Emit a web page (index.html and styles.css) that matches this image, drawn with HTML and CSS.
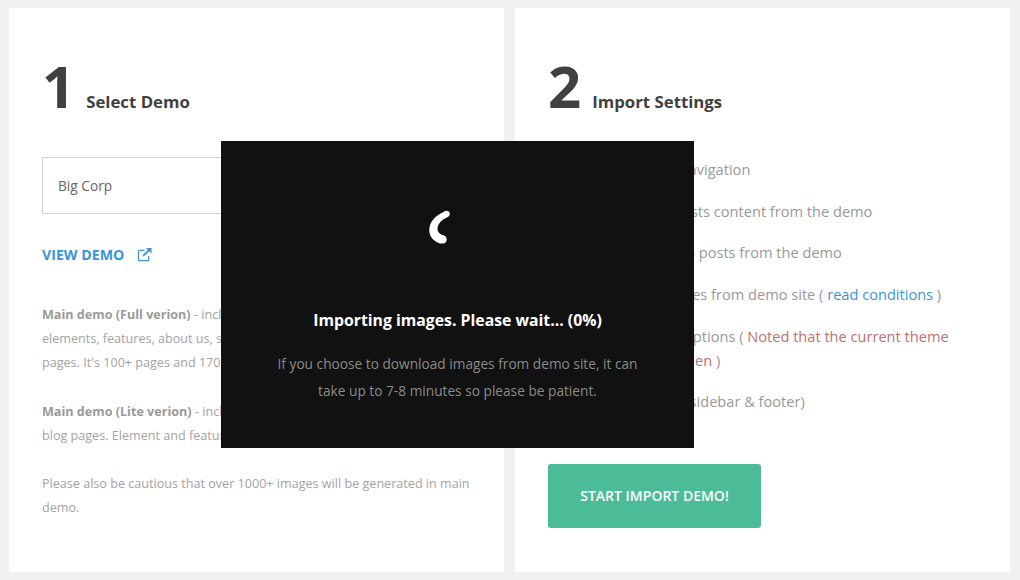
FILE: index.html
```html
<!DOCTYPE html>
<html lang="en">
<head>
    <meta charset="UTF-8">
    <meta name="viewport" content="width=device-width, initial-scale=1.0">
    <title>Import Demo</title>
    <link rel="stylesheet" href="styles.css">
</head>
<body>
    <div class="columns">
        <section class="panel">
            <div class="step-head">
                <span class="step-num">1</span>
                <h2 class="step-title">Select Demo</h2>
            </div>
            <div class="select-box">Big Corp</div>
            <a class="view-demo" href="#">VIEW DEMO
                <svg class="ext-icon" viewBox="0 0 16 16" fill="none" stroke="#3a94dc" stroke-width="1.4">
                    <path d="M8 3.500H3a1.500 1.500 0 0 0-1.500 1.500v8A1.500 1.500 0 0 0 3 14.500h8a1.500 1.500 0 0 0 1.500-1.500V9.500"/>
                    <path d="M6.500 9.500 13.500 2.500" stroke-width="2"/>
                    <path d="M9.500 1h6v6z" fill="#3a94dc" stroke="none"/>
                </svg>
            </a>
            <p class="desc"><strong>Main demo (Full verion)</strong> - includes all homepages, blog pages,<br>
                elements, features, about us, services, contact and other inner<br>
                pages. It's 100+ pages and 1700+ images in total.</p>
            <p class="desc"><strong>Main demo (Lite verion)</strong> - includes only a homepage and the main<br>
                blog pages. Element and feature pages are not included.</p>
            <p class="desc">Please also be cautious that over 1000+ images will be generated in main demo.</p>
        </section>
        <section class="panel">
            <div class="step-head">
                <span class="step-num">2</span>
                <h2 class="step-title">Import Settings</h2>
            </div>
            <ul class="options">
                <li><span class="check"></span><span>Import menu navigation</span></li>
                <li><span class="check"></span><span>Import page posts content from the demo</span></li>
                <li><span class="check"></span><span>Import portfolio posts from the demo</span></li>
                <li><span class="check"></span><span>Download images from demo site ( <a class="link" href="#">read conditions</a> )</span></li>
                <li><span class="check"></span><span>Import theme options ( <span class="warn">Noted that the current theme will get overridden</span> )</span></li>
                <li><span class="check"></span><span>Import widget (sidebar &amp; footer)</span></li>
            </ul>
            <button class="start-btn">START IMPORT DEMO!</button>
        </section>
    </div>
    <div class="modal">
        <svg class="spinner" viewBox="0 0 26 34" fill="#fff">
            <path d="M17.500 2C20 0 23.500 .5 23.800 4C23.900 6.500 21 7.500 18.500 8.700C14.500 10.700 11.500 15 11.500 19C11.500 22 14 24.500 18 25.500C20.500 26.500 21.500 29.500 20 32C18.500 34 15 34 12 32.700C6 30 3 25 3.300 19.500C3.500 12 9.500 5.500 17.500 2Z"/>
        </svg>
        <h3 class="modal-title">Importing images. Please wait... (0%)</h3>
        <p class="modal-text">If you choose to download images from demo site, it can take up to 7-8 minutes so please be patient.</p>
    </div>
</body>
</html>
```

FILE: styles.css
```css
* {
    box-sizing: border-box;
    margin: 0;
    padding: 0;
    font-family: "Open Sans", "Noto Sans", sans-serif;
}
body {
    background: #f1f1f1;
    height: 580px;
    overflow: hidden;
    position: relative;
}
.columns {
    display: flex;
    gap: 11px;
    padding: 8px 10px 8px 9px;
    height: 580px;
}
.panel {
    flex: 1;
    background: #fff;
    padding: 47px 33px 0;
}
.step-head {
    display: flex;
    align-items: baseline;
    gap: 11px;
    height: 62px;
    color: #404040;
}
.step-num {
    font-size: 58px;
    font-weight: 700;
    line-height: 62px;
}
.step-title {
    font-size: 16.800px;
    font-weight: 700;
}
.select-box {
    margin-top: 40px;
    height: 57px;
    border: 1px solid #d3d3d3;
    padding-left: 15px;
    font-size: 13.700px;
    line-height: 56px;
    color: #666;
}
.view-demo {
    display: flex;
    align-items: center;
    gap: 13px;
    margin-top: 31px;
    font-size: 14.200px;
    font-weight: 700;
    color: #3a94dc;
    text-decoration: none;
}
.ext-icon {
    width: 15px;
    height: 15px;
}
.desc {
    margin-top: 24px;
    font-size: 12.600px;
    line-height: 24.200px;
    color: #a3a3a3;
}
.view-demo + .desc {
    margin-top: 39px;
}
.desc strong {
    font-weight: 700;
    color: #9a9a9a;
}
.options {
    list-style: none;
    margin-top: 40px;
    padding-right: 10px;
}
.options li {
    display: flex;
    gap: 22px;
    font-size: 14.600px;
    line-height: 24px;
    color: #999;
    margin-bottom: 17.700px;
}
.check {
    flex: none;
    width: 16px;
    height: 16px;
    margin-top: 4px;
    border: 1px solid #ccc;
}
.link {
    color: #3a94dc;
    text-decoration: none;
}
.warn {
    color: #bf7070;
}
.start-btn {
    width: 213px;
    height: 64px;
    margin-top: 33px;
    padding-bottom: 2px;
    border: none;
    border-radius: 3px;
    background: #4cbb97;
    color: #fff;
    font-size: 14px;
    font-weight: 600;
}
.modal {
    position: absolute;
    left: 221px;
    top: 141px;
    width: 473px;
    height: 307px;
    background: #111;
    padding: 69px 50px 0;
    text-align: center;
}
.spinner {
    display: block;
    width: 26px;
    height: 34px;
    margin-left: 155px;
}
.modal-title {
    margin-top: 65px;
    font-size: 15.800px;
    font-weight: 700;
    color: #fff;
}
.modal-text {
    margin-top: 19px;
    font-size: 13.700px;
    line-height: 27px;
    color: #8a8a8a;
}
```
